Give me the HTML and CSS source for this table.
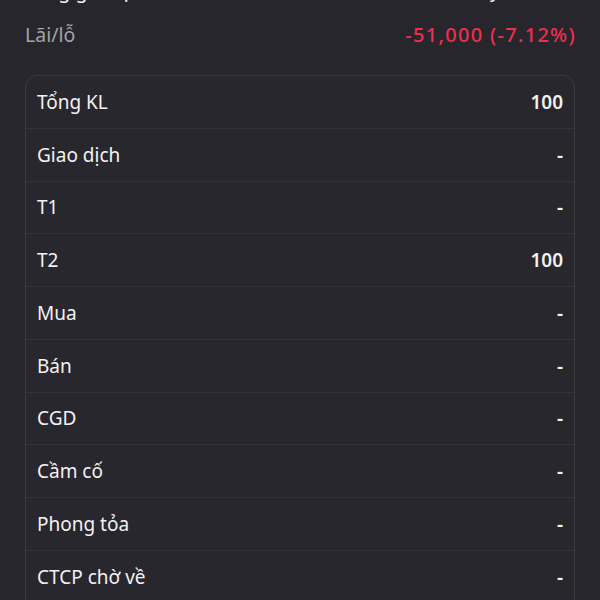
FILE: index.html
```html
<!DOCTYPE html>
<html lang="vi">
<head>
<meta charset="utf-8">
<link rel="stylesheet" href="styles.css">
</head>
<body>
<div class="page">
  <div class="summary">
    <div class="sum-row">
      <span class="sum-label strong">Tổng giá trị</span>
      <span class="sum-value strong">Hôm nay 665,000</span>
    </div>
    <div class="sum-row">
      <span class="sum-label">Lãi/lỗ</span>
      <span class="sum-value loss">-51,000 (-7.12%)</span>
    </div>
  </div>
  <div class="card">
    <div class="row"><span>Tổng KL</span><span class="val">100</span></div>
    <div class="row"><span>Giao dịch</span><span class="val">-</span></div>
    <div class="row"><span>T1</span><span class="val">-</span></div>
    <div class="row"><span>T2</span><span class="val">100</span></div>
    <div class="row"><span>Mua</span><span class="val">-</span></div>
    <div class="row"><span>Bán</span><span class="val">-</span></div>
    <div class="row"><span>CGD</span><span class="val">-</span></div>
    <div class="row"><span>Cầm cố</span><span class="val">-</span></div>
    <div class="row"><span>Phong tỏa</span><span class="val">-</span></div>
    <div class="row"><span>CTCP chờ về</span><span class="val">-</span></div>
    <div class="row"><span>Quyền chờ về</span><span class="val">-</span></div>
  </div>
</div>
</body>
</html>
```

FILE: styles.css
```css
html, body {
  margin: 0;
  padding: 0;
  background: #27262c;
  overflow: hidden;
}
.page {
  width: 550px;
  margin: -32px 25px 0;
  font-family: "Noto Sans", Lato, sans-serif;
  font-size: 19px;
  color: #f2f2f4;
}
.summary {
  display: flex;
  flex-direction: column;
}
.sum-row {
  height: 44px;
  display: flex;
  align-items: center;
  justify-content: space-between;
}
.sum-label {
  color: #a3a3a8;
  font-size: 19.5px;
}
.sum-label.strong, .sum-value.strong {
  color: #f2f2f4;
}
.loss {
  color: #ec2f4f;
  font-size: 20px;
  font-weight: 500;
  letter-spacing: 1.3px;
  margin-right: -1px;
}
.card {
  margin-top: 19px;
  border: 1px solid #3a3a40;
  border-radius: 12px;
  background: #28272d;
}
.row {
  box-sizing: border-box;
  height: 52.75px;
  display: flex;
  align-items: center;
  justify-content: space-between;
  padding: 0 11px;
  border-bottom: 1px solid #333238;
}
.val {
  font-weight: 600;
}
```
